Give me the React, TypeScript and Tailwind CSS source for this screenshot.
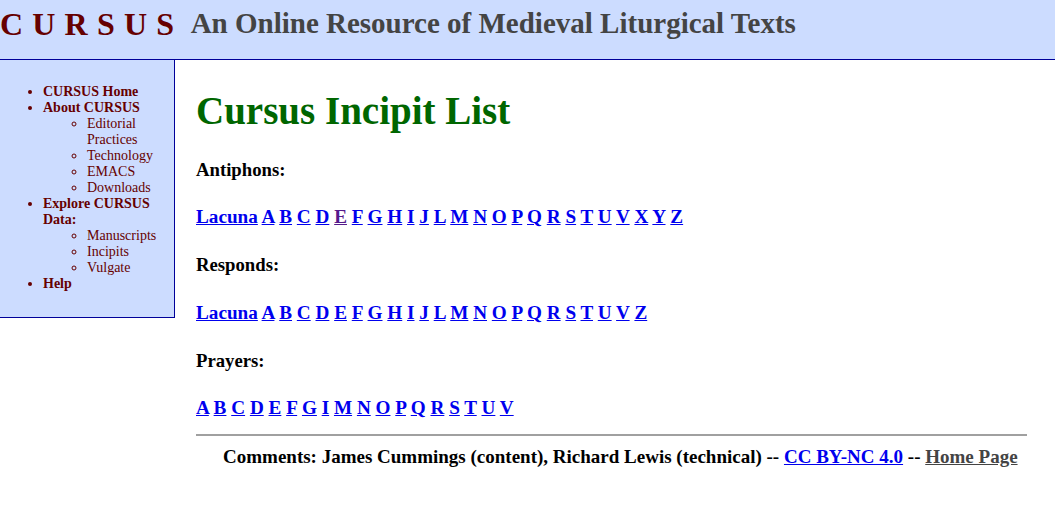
import React from 'react';

const serif = { fontFamily: '"Liberation Serif", "Times New Roman", serif' };

const antiphons = ['A', 'B', 'C', 'D', 'E', 'F', 'G', 'H', 'I', 'J', 'L', 'M', 'N', 'O', 'P', 'Q', 'R', 'S', 'T', 'U', 'V', 'X', 'Y', 'Z'];
const responds = ['A', 'B', 'C', 'D', 'E', 'F', 'G', 'H', 'I', 'J', 'L', 'M', 'N', 'O', 'P', 'Q', 'R', 'S', 'T', 'U', 'V', 'Z'];
const prayers = ['A', 'B', 'C', 'D', 'E', 'F', 'G', 'I', 'M', 'N', 'O', 'P', 'Q', 'R', 'S', 'T', 'U', 'V'];

function LetterLine({ letters, lacuna, visited }: { letters: string[]; lacuna?: boolean; visited?: string }) {
  return (
    <p className="text-[19.2px] font-bold leading-[22px]">
      {lacuna && (
        <>
          <a href="#" className="text-[#0000ee] underline">Lacuna</a>{' '}
        </>
      )}
      {letters.map((l, i) => (
        <React.Fragment key={l}>
          <a href="#" className={l === visited ? 'text-[#551a8b] underline' : 'text-[#0000ee] underline'}>{l}</a>
          {i < letters.length - 1 ? ' ' : ''}
        </React.Fragment>
      ))}
    </p>
  );
}

export default function App() {
  return (
    <div className="min-h-[516px] bg-white text-black" style={serif}>
      {/* Header */}
      <div className="h-[60px] bg-[#ccdcff] border-b border-[#000099] flex items-center pb-[12px]">
        <span className="text-[32px] font-bold text-[#660000] tracking-[0.6px] whitespace-pre leading-none">C U R S U S</span>
        <span className="ml-[16px] text-[29px] font-bold text-[#444444] leading-none">An Online Resource of Medieval Liturgical Texts</span>
      </div>

      <div className="flex items-start">
        {/* Sidebar */}
        <div className="w-[175px] h-[258px] shrink-0 bg-[#ccdcff] border-r border-b border-[#000099] pt-[24px] text-[14px] leading-[16px] text-[#660000]">
          <ul className="list-disc pl-[43px] font-bold">
            <li><a href="#">CURSUS Home</a></li>
            <li>
              <a href="#">About CURSUS</a>
              <ul className="list-[circle] pl-[44px] font-normal">
                <li><a href="#">Editorial Practices</a></li>
                <li><a href="#">Technology</a></li>
                <li><a href="#">EMACS</a></li>
                <li><a href="#">Downloads</a></li>
              </ul>
            </li>
            <li>
              <a href="#">Explore CURSUS Data:</a>
              <ul className="list-[circle] pl-[44px] font-normal">
                <li><a href="#">Manuscripts</a></li>
                <li><a href="#">Incipits</a></li>
                <li><a href="#">Vulgate</a></li>
              </ul>
            </li>
            <li><a href="#">Help</a></li>
          </ul>
        </div>

        {/* Main */}
        <div className="flex-1 pl-[21px] pr-[28px]">
          <h1 className="mt-[28px] text-[39px] font-bold leading-[46px] text-[#006600]">Cursus Incipit List</h1>

          <h3 className="mt-[25px] text-[18.72px] font-bold leading-[22px]">Antiphons:</h3>
          <div className="mt-[25px]">
            <LetterLine letters={antiphons} lacuna visited="E" />
          </div>

          <h3 className="mt-[26px] text-[18.72px] font-bold leading-[22px]">Responds:</h3>
          <div className="mt-[26px]">
            <LetterLine letters={responds} lacuna />
          </div>

          <h3 className="mt-[26px] text-[18.72px] font-bold leading-[22px]">Prayers:</h3>
          <div className="mt-[25px]">
            <LetterLine letters={prayers} />
          </div>

          <hr className="mt-[15px] border-0 border-t-2 border-[#a0a0a0]" />

          <p className="mt-[10px] pl-[27px] text-[19px] font-bold leading-[22px]">
            Comments: James Cummings (content), Richard Lewis (technical) --{' '}
            <a href="#" className="text-[#0000ee] underline">CC BY-NC 4.0</a> --{' '}
            <a href="#" className="text-[#444444] underline">Home Page</a>
          </p>
        </div>
      </div>
    </div>
  );
}
